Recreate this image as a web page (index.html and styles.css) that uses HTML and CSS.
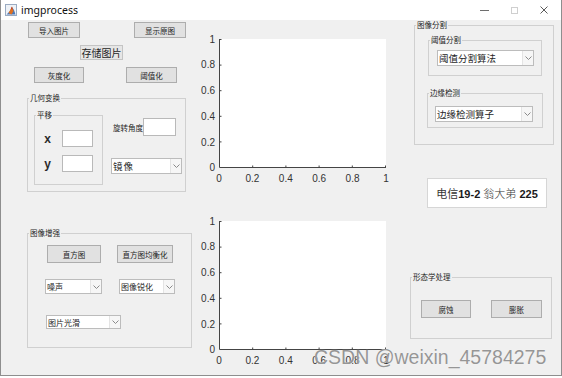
FILE: index.html
```html
<!DOCTYPE html>
<html lang="zh">
<head>
<meta charset="utf-8">
<title>imgprocess</title>
<link rel="stylesheet" href="styles.css">
</head>
<body>
<div class="window">
  <div class="titlebar">
    <svg class="appicon" width="12" height="12" viewBox="0 0 12 12">
      <rect x="0.5" y="0.5" width="11" height="11" fill="#eef2f7" stroke="#9aabc2"/>
      <polygon points="1.5,10.5 5,7 7,3 9,6 10.5,10.5" fill="#4a78b8"/>
      <polygon points="3.5,9 6,4.5 7,2.5 8.5,7 6.5,10.5" fill="#e07020"/>
      <polygon points="6,4.5 7,2.5 7.5,6" fill="#c0392b"/>
    </svg>
    <span class="title">imgprocess</span>
    <div class="winctl">
      <span class="ctl"><svg width="9" height="9" viewBox="0 0 9 9"><path d="M0 4.5H9" stroke="#6e6e6e" stroke-width="1"/></svg></span>
      <span class="ctl"><svg width="7" height="7" viewBox="0 0 7 7"><rect x="0.5" y="0.5" width="6" height="6" fill="none" stroke="#cfcfcf"/></svg></span>
      <span class="ctl"><svg width="8" height="8" viewBox="0 0 8 8"><path d="M0.5 0.5L7.5 7.5M7.5 0.5L0.5 7.5" stroke="#5a5a5a" stroke-width="1"/></svg></span>
    </div>
  </div>

  <div class="client">
    <!-- left column -->
    <div class="col-left">
      <div class="row r1">
        <div class="btn b-import">导入图片</div>
        <div class="btn b-show">显示原图</div>
      </div>
      <div class="row r2">
        <div class="btn b-save">存储图片</div>
      </div>
      <div class="row r3">
        <div class="btn b-gray">灰度化</div>
        <div class="btn b-thr">阈值化</div>
      </div>

      <div class="panel p-geo">
        <span class="ptitle">几何变换</span>
        <div class="panel p-shift">
          <span class="ptitle">平移</span>
          <div class="xyrow xy1"><span class="xy">x</span><div class="edit e-xy"></div></div>
          <div class="xyrow xy2"><span class="xy">y</span><div class="edit e-xy"></div></div>
        </div>
        <div class="geo-right">
          <div class="rot"><span class="lbl">旋转角度</span><div class="edit e-rot"></div></div>
          <div class="select s-mirror"><span class="stext">镜像</span><span class="arrow"><svg width="7" height="4" viewBox="0 0 7 4"><path d="M0.5 0.5L3.5 3.5L6.5 0.5" fill="none" stroke="#8a8a8a"/></svg></span></div>
        </div>
      </div>

      <div class="panel p-enh">
        <span class="ptitle">图像增强</span>
        <div class="row e1">
          <div class="btn b-hist">直方图</div>
          <div class="btn b-histeq">直方图均衡化</div>
        </div>
        <div class="row e2">
          <div class="select small s-noise"><span class="stext">噪声</span><span class="arrow"><svg width="7" height="4" viewBox="0 0 7 4"><path d="M0.5 0.5L3.5 3.5L6.5 0.5" fill="none" stroke="#8a8a8a"/></svg></span></div>
          <div class="select small s-sharp"><span class="stext">图像锐化</span><span class="arrow"><svg width="7" height="4" viewBox="0 0 7 4"><path d="M0.5 0.5L3.5 3.5L6.5 0.5" fill="none" stroke="#8a8a8a"/></svg></span></div>
        </div>
        <div class="row e3">
          <div class="select small s-smooth"><span class="stext">图片光滑</span><span class="arrow"><svg width="7" height="4" viewBox="0 0 7 4"><path d="M0.5 0.5L3.5 3.5L6.5 0.5" fill="none" stroke="#8a8a8a"/></svg></span></div>
        </div>
      </div>
    </div>

    <!-- middle column: axes -->
    <div class="col-mid">
      <div class="axes ax1">
        <div class="yticks"><span>1</span><span>0.8</span><span>0.6</span><span>0.4</span><span>0.2</span><span>0</span></div>
        <div class="plot">
          <svg width="167" height="129" viewBox="0 0 167 129">
            <path d="M0.5 0V128.5H167" fill="none" stroke="#444"/>
            <path d="M33.7 128.5V126.5M66.9 128.5V126.5M100.1 128.5V126.5M133.3 128.5V126.5M166.5 128.5V126.5M0.5 102.9H2.5M0.5 77.3H2.5M0.5 51.7H2.5M0.5 26.1H2.5M0.5 0.5H2.5" stroke="#444"/>
          </svg>
        </div>
        <div class="xticks"><span>0</span><span>0.2</span><span>0.4</span><span>0.6</span><span>0.8</span><span>1</span></div>
      </div>
      <div class="axes ax2">
        <div class="yticks"><span>1</span><span>0.8</span><span>0.6</span><span>0.4</span><span>0.2</span><span>0</span></div>
        <div class="plot">
          <svg width="167" height="129" viewBox="0 0 167 129">
            <path d="M0.5 0V128.5H167" fill="none" stroke="#444"/>
            <path d="M33.7 128.5V126.5M66.9 128.5V126.5M100.1 128.5V126.5M133.3 128.5V126.5M166.5 128.5V126.5M0.5 102.9H2.5M0.5 77.3H2.5M0.5 51.7H2.5M0.5 26.1H2.5M0.5 0.5H2.5" stroke="#444"/>
          </svg>
        </div>
        <div class="xticks"><span>0</span><span>0.2</span><span>0.4</span><span>0.6</span><span>0.8</span><span>1</span></div>
      </div>
    </div>

    <!-- right column -->
    <div class="col-right">
      <div class="panel p-seg">
        <span class="ptitle">图像分割</span>
        <div class="panel p-thrseg">
          <span class="ptitle">阈值分割</span>
          <div class="select big s-thr"><span class="stext">阈值分割算法</span><span class="arrow"><svg width="7" height="4" viewBox="0 0 7 4"><path d="M0.5 0.5L3.5 3.5L6.5 0.5" fill="none" stroke="#8a8a8a"/></svg></span></div>
        </div>
        <div class="panel p-edge">
          <span class="ptitle">边缘检测</span>
          <div class="select big s-edge"><span class="stext">边缘检测算子</span><span class="arrow"><svg width="7" height="4" viewBox="0 0 7 4"><path d="M0.5 0.5L3.5 3.5L6.5 0.5" fill="none" stroke="#8a8a8a"/></svg></span></div>
        </div>
      </div>

      <div class="infobox"><span class="infotext"><span class="cn">电信</span><b>19-2</b> <span class="cn name">翁大弟</span> <b>225</b></span></div>

      <div class="panel p-morph">
        <span class="ptitle">形态学处理</span>
        <div class="row m1">
          <div class="btn b-erode">腐蚀</div>
          <div class="btn b-dilate">膨胀</div>
        </div>
      </div>
    </div>
  </div>

  <div class="watermark">CSDN @weixin_45784275</div>
</div>
</body>
</html>
```

FILE: styles.css
```css
* { box-sizing: border-box; }

body {
  margin: 0;
  background: #ffffff;
  font-family: "Noto Sans CJK SC", "Noto Sans", sans-serif;
  color: #222;
}

.window {
  position: relative;
  width: 562px;
  height: 376px;
  border-left: 1px solid #8e8e8e;
  border-right: 1px solid #8e8e8e;
  border-bottom: 1px solid #8e8e8e;
  background: #f0f0f0;
  display: flex;
  flex-direction: column;
}

/* title bar */
.titlebar {
  height: 20px;
  background: #ffffff;
  display: flex;
  align-items: center;
  flex: none;
}
.appicon { margin-left: 4px; flex: none; }
.title {
  margin-left: 4px;
  font-family: "Noto Sans", sans-serif;
  font-size: 10.5px;
  color: #111;
  line-height: 20px;
}
.winctl {
  margin-left: auto;
  margin-right: 2px;
  display: flex;
  height: 20px;
}
.ctl {
  width: 30px;
  display: flex;
  align-items: center;
  justify-content: center;
}

/* client area */
.client {
  flex: 1;
  display: flex;
  align-items: flex-start;
}
.col-left { width: 191px; flex: none; display: flex; flex-direction: column; align-items: flex-start; }
.col-mid { width: 208px; flex: none; display: flex; flex-direction: column; }
.col-right { flex: 1; display: flex; flex-direction: column; align-items: flex-start; }

.row { display: flex; align-items: flex-start; }

/* generic controls */
.btn {
  background: #e1e1e1;
  border: 1px solid #adadad;
  display: flex;
  align-items: center;
  justify-content: center;
  font-size: 7.5px;
  color: #1e1e1e;
  white-space: nowrap;
  flex: none;
}
.edit {
  background: #ffffff;
  border: 1px solid #b9b9b9;
  flex: none;
}
.select {
  background: #ffffff;
  border: 1px solid #bcbcbc;
  display: flex;
  align-items: stretch;
  flex: none;
  color: #1e1e1e;
}
.select .stext {
  flex: 1;
  padding-left: 1px;
  display: flex;
  align-items: center;
  white-space: nowrap;
  overflow: hidden;
}
.select .arrow {
  width: 11px;
  flex: none;
  display: flex;
  align-items: center;
  justify-content: center;
  background: #f6f6f6;
  border-left: 1px solid #e4e4e4;
}
.select.small { font-size: 8px; }
.select.big { font-size: 9.5px; }

.panel {
  position: relative;
  border: 1px solid #d0d0d0;
  flex: none;
}
.ptitle {
  position: absolute;
  top: -6px;
  left: 1px;
  padding: 0 1px;
  background: #f0f0f0;
  font-size: 7.5px;
  line-height: 10px;
  color: #1e1e1e;
  white-space: nowrap;
}

/* left column placement */
.r1 { margin-top: 2px; }
.b-import { margin-left: 27px; width: 52px; height: 16px; }
.b-show { margin-left: 54px; width: 52px; height: 16px; }
.r2 { margin-top: 7px; }
.b-save { margin-left: 79px; width: 43px; height: 15px; font-size: 10px; background: #e6e6e6; border-color: #c4c4c4; }
.r3 { margin-top: 7px; }
.b-gray { margin-left: 33px; width: 50px; height: 16px; }
.b-thr { margin-left: 42px; width: 51px; height: 16px; }

.p-geo {
  margin-top: 15px;
  margin-left: 26px;
  width: 159px;
  height: 94px;
  display: flex;
  align-items: flex-start;
}
.p-shift {
  margin-left: 6px;
  margin-top: 16px;
  width: 69px;
  height: 70px;
  display: flex;
  flex-direction: column;
}
.xyrow { display: flex; align-items: center; }
.xy1 { margin-top: 14px; }
.xy2 { margin-top: 8px; }
.xy {
  width: 25px;
  text-align: center;
  font-family: "Liberation Sans", Arial, sans-serif;
  font-weight: bold;
  font-size: 12px;
  color: #2b2b2b;
}
.e-xy { margin-left: 2px; width: 31px; height: 17px; }

.geo-right {
  margin-left: 8px;
  display: flex;
  flex-direction: column;
  align-items: flex-start;
}
.rot { margin-top: 19px; display: flex; align-items: center; }
.lbl { margin-left: 2px; width: 30px; font-size: 7.5px; white-space: nowrap; color: #1e1e1e; }
.e-rot { width: 33px; height: 18px; }
.s-mirror { margin-top: 22px; width: 71px; height: 16px; font-size: 9.5px; letter-spacing: 1px; }

.p-enh {
  margin-top: 41px;
  margin-left: 26px;
  width: 165px;
  height: 115px;
  display: flex;
  flex-direction: column;
  align-items: flex-start;
}
.e1 { margin-top: 11px; margin-left: 19px; gap: 16px; }
.b-hist { width: 54px; height: 18px; }
.b-histeq { width: 56px; height: 18px; }
.e2 { margin-top: 16px; margin-left: 17px; gap: 17px; }
.s-noise { width: 57px; height: 15px; }
.s-sharp { width: 56px; height: 15px; }
.e3 { margin-top: 21px; margin-left: 18px; }
.s-smooth { width: 75px; height: 14px; }

/* axes */
.axes {
  display: grid;
  grid-template-columns: 27px 167px;
  grid-template-rows: 129px auto;
}
.ax1 { margin-top: 19px; }
.ax2 { margin-top: 37px; }
.plot { grid-column: 2; grid-row: 1; background: #ffffff; }
.plot svg { display: block; }
.yticks {
  grid-column: 1;
  grid-row: 1;
  margin: -5.5px 0;
  display: flex;
  flex-direction: column;
  justify-content: space-between;
  align-items: flex-end;
  padding-right: 4px;
  font-family: "Liberation Sans", Arial, sans-serif;
  font-size: 10px;
  line-height: 11px;
  color: #333;
}
.xticks {
  grid-column: 2;
  grid-row: 2;
  margin: 5px -10px 0 -10px;
  display: flex;
  justify-content: space-between;
  font-family: "Liberation Sans", Arial, sans-serif;
  font-size: 10px;
  line-height: 11px;
  color: #333;
}
.xticks span { width: 20px; text-align: center; }

/* right column */
.p-seg {
  margin-top: 5px;
  margin-left: 14px;
  width: 140px;
  height: 120px;
  display: flex;
  flex-direction: column;
  align-items: flex-start;
}
.p-thrseg {
  margin-top: 14px;
  margin-left: 13px;
  width: 114px;
  height: 36px;
  display: flex;
  flex-direction: column;
  align-items: flex-start;
}
.s-thr { margin-top: 9px; margin-left: 8px; width: 97px; height: 16px; }
.p-edge {
  margin-top: 17px;
  margin-left: 12px;
  width: 116px;
  height: 35px;
  display: flex;
  flex-direction: column;
  align-items: flex-start;
}
.s-edge { margin-top: 12px; margin-left: 7px; width: 98px; height: 16px; }

.infobox {
  margin-top: 33px;
  margin-left: 27px;
  width: 120px;
  height: 30px;
  background: #ffffff;
  border: 1px solid #d6d6d6;
  display: flex;
  align-items: center;
  justify-content: center;
  font-size: 11px;
  color: #1a1a1a;
  font-family: "Liberation Sans", Arial, "Noto Sans CJK SC", sans-serif;
}
.infotext { white-space: pre; }
.infobox .cn { font-family: "Noto Sans CJK SC", sans-serif; color: #333; }
.infobox .name { font-weight: 300; }
.infobox b { font-weight: bold; }

.p-morph {
  margin-top: 69px;
  margin-left: 10px;
  width: 142px;
  height: 62px;
  display: flex;
  flex-direction: column;
  align-items: flex-start;
}
.m1 { margin-top: 22px; margin-left: 10px; gap: 20px; }
.b-erode { width: 50px; height: 18px; }
.b-dilate { width: 51px; height: 18px; }

/* watermark overlay */
.watermark {
  position: absolute;
  left: 313px;
  top: 347px;
  font-family: "Liberation Sans", Arial, sans-serif;
  font-size: 19.5px;
  line-height: 20px;
  color: #969696;
  white-space: nowrap;
  text-shadow: 0 0 1px rgba(255,255,255,0.9);
}
```
